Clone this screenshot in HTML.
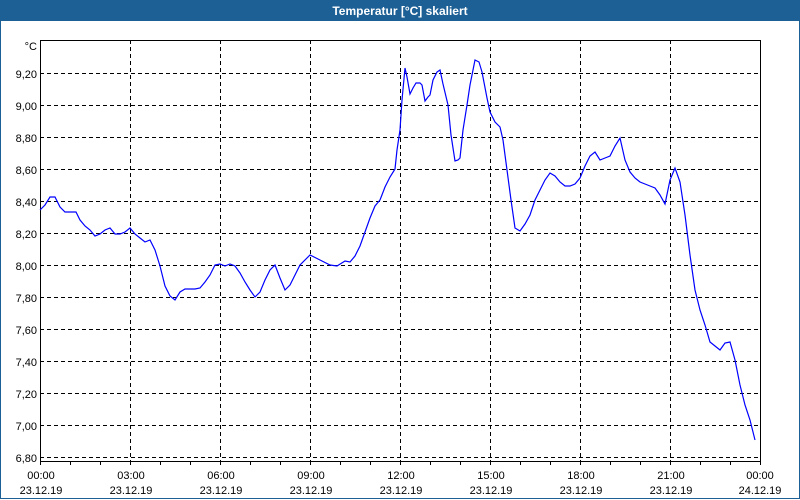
<!DOCTYPE html>
<html><head><meta charset="utf-8"><style>
body{margin:0;width:800px;height:500px;overflow:hidden;background:#fff;font-family:"Liberation Sans","DejaVu Sans",sans-serif}
.t{position:absolute;left:0;top:0;width:800px;height:21px;background:#1d6096;color:#fff;font-weight:bold;font-size:12px;text-align:center;line-height:22px}
.fr{position:absolute;left:0;top:21px;width:798px;height:477px;border:1px solid #1d6096;border-top:none}
</style></head><body>
<div class="t">Temperatur [°C] skaliert</div>
<div class="fr"></div>
<svg width="800" height="500" style="position:absolute;left:0;top:0" font-family="Liberation Sans, DejaVu Sans, sans-serif" font-size="11">
<g stroke="#000" stroke-width="1" stroke-dasharray="4,3" fill="none">
<path d="M40 73.5H760M40 105.5H760M40 137.5H760M40 169.5H760M40 201.5H760M40 233.5H760M40 265.5H760M40 297.5H760M40 329.5H760M40 361.5H760M40 393.5H760M40 425.5H760M40 457.5H760"/>
<path d="M130.5 40V461M220.5 40V461M310.5 40V461M400.5 40V461M490.5 40V461M580.5 40V461M670.5 40V461"/>
</g>
<path d="M40.5 40.5H760.5V461.5H40.5Z" stroke="#000" fill="none"/>
<path stroke="#000" d="M40.5 461V465M70.5 461V465M100.5 461V465M130.5 461V465M160.5 461V465M190.5 461V465M220.5 461V465M250.5 461V465M280.5 461V465M310.5 461V465M340.5 461V465M370.5 461V465M400.5 461V465M430.5 461V465M460.5 461V465M490.5 461V465M520.5 461V465M550.5 461V465M580.5 461V465M610.5 461V465M640.5 461V465M670.5 461V465M700.5 461V465M730.5 461V465M760.5 461V465"/>
<polyline fill="none" stroke="#0000ff" stroke-width="1.2" points="40,210 45,205 50,197 55,197 60,207 65,212 72,212 76,212 80,220 85,226 90,230 95,236 100,234 105,230 110,228 115,234 120,234 125,232 130,228 135,234 140,238 145,242 150,240 155,250 160,266 165,286 170,296 175,300 180,292 185,289 195,289 200,288 205,282 210,275 215,265 220,264 225,266 230,264 235,266 240,273 245,282 250,290 255,297 260,292 265,280 270,270 275,265 280,278 285,290 290,285 295,275 300,265 310,255 320,260 330,265 337,266 345,261 350,262 355,256 360,246 365,232 370,218 375,206 380,200 385,187 390,177 395,169 397,150 400,130 402,100 405,68 407,77 410,94 413,88 416,83 420,83 422,85 425,101 428,97 430,95 433,80 437,72 440,70 443,84 448,105 451,135 455,161 458,160 460,158 463,130 467,105 470,85 475,60 479,62 482,72 487,98 490,112 495,122 500,127 503,140 507,170 511,200 515,228 520,231 525,224 530,215 535,200 540,190 545,180 550,173 555,176 560,182 565,186 570,186 575,184 580,178 585,166 590,156 595,152 600,160 605,158 610,156 615,146 620,138 625,160 630,172 635,178 640,182 645,184 650,186 655,188 660,195 665,204 670,180 675,168 680,182 685,215 690,255 695,290 700,310 705,325 710,342 715,346 720,350 725,343 730,342 735,360 740,385 745,405 750,420 755,440"/>
<g text-anchor="end" fill="#000">
<text x="37" y="50">°C</text>
<text x="37" y="78">9,20</text><text x="37" y="110">9,00</text><text x="37" y="142">8,80</text><text x="37" y="174">8,60</text><text x="37" y="206">8,40</text><text x="37" y="238">8,20</text><text x="37" y="270">8,00</text><text x="37" y="302">7,80</text><text x="37" y="334">7,60</text><text x="37" y="366">7,40</text><text x="37" y="398">7,20</text><text x="37" y="430">7,00</text><text x="37" y="462">6,80</text>
</g>
<g text-anchor="middle" fill="#000">
<text x="41" y="479">00:00</text><text x="41" y="494">23.12.19</text>
<text x="131" y="479">03:00</text><text x="131" y="494">23.12.19</text>
<text x="221" y="479">06:00</text><text x="221" y="494">23.12.19</text>
<text x="311" y="479">09:00</text><text x="311" y="494">23.12.19</text>
<text x="401" y="479">12:00</text><text x="401" y="494">23.12.19</text>
<text x="491" y="479">15:00</text><text x="491" y="494">23.12.19</text>
<text x="581" y="479">18:00</text><text x="581" y="494">23.12.19</text>
<text x="671" y="479">21:00</text><text x="671" y="494">23.12.19</text>
<text x="760" y="479">00:00</text><text x="760" y="494">24.12.19</text>
</g>
</svg>
</body></html>
